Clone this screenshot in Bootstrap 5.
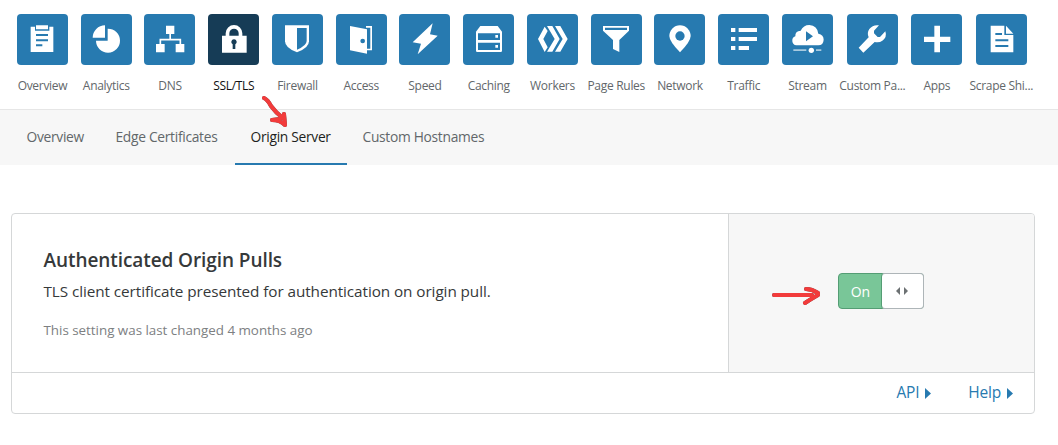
<!DOCTYPE html>
<html lang="en">
<head>
<meta charset="utf-8">
<meta name="viewport" content="width=device-width, initial-scale=1">
<title>SSL/TLS - Origin Server</title>
<link href="https://cdn.jsdelivr.net/npm/bootstrap@5.3.0/dist/css/bootstrap.min.css" rel="stylesheet">
<style>
:root{--blue:#277ab0;--navy:#163c56}
body{font-family:"Open Sans","Noto Sans",sans-serif;color:#36393a;height:445px;overflow:hidden}
.apps{height:109px;padding:14px 0 0 10.6px}
.app{width:63.75px;flex:none;color:#62676a;font-size:12px;letter-spacing:-.3px;line-height:18px;--tile:var(--blue)}
.app.wide{width:66px}.app.slim{width:63px}
.app.active{color:#111;--tile:var(--navy)}
.app svg{width:51px;height:51px;background:var(--tile);border-radius:4px;fill:#fff;margin-bottom:12px}
.app .cut{fill:var(--tile)}
.app .ln{fill:none;stroke:#fff}
.subnav{height:56px;background:#f7f7f7;border-top:1px solid #e6e6e6;padding-left:11px}
.subnav .nav-link{padding:16px 0 0 15.5px;height:55px;line-height:21px;font-size:13.8px;letter-spacing:-.3px;color:#62676a}
.subnav .nav-link.active{color:#1d1f20;border-bottom:2px solid var(--blue)}
.t1{width:89px}.t2{width:135px}.t3{width:112px}
.setting{width:1024px;height:201px;margin:48px 0 0 11px;border:1px solid #d5d7d8;border-radius:4px;overflow:hidden}
.setting .info{width:716px;padding:33px 0 0 31.5px}
.setting h1{font-size:19px;font-weight:600;letter-spacing:-.08px;line-height:26px;margin:0}
.setting .desc{font-size:15.3px;letter-spacing:-.08px;line-height:22px;margin:7px 0 0}
.setting .note{font-size:13.4px;letter-spacing:-.02px;line-height:20px;color:#7d8082;margin:18px 0 0}
.control{height:158px;background:#f7f7f7;border-left:1px solid #d5d7d8;padding:59px 0 0 109px}
.toggle{width:86px;height:36px;background:#79c698;border:1px solid #549d74;border-radius:4px;color:#fff;font-size:14px;line-height:36px;letter-spacing:-.2px}
.toggle .lbl{width:43px}
.toggle .knob{width:43px;height:36px;margin:-1px -1px 0 0;padding-right:2px;background:#fff;border:1px solid #aeb5b8;border-left-color:#549d74;border-radius:4px}
.setting .foot{height:41px;border-top:1px solid #d5d7d8;font-size:15.5px;letter-spacing:-.2px;padding-right:21px;gap:37px}
.foot a{color:var(--blue);text-decoration:none;gap:6px}
.mark-arrow{position:absolute;fill:none;stroke-linecap:round;stroke-linejoin:round;filter:drop-shadow(0 0 .5px #555)}
</style>
</head>
<body>
<nav class="apps d-flex text-center text-nowrap">
<div class="app"><svg viewBox="0 0 153 153"><path d="M41 38h68v76H41z"/><path class="cut" d="M54 35h43v15H54z"/><path d="M57 34h36v12H57z"/><path class="cut" d="M57 60h36v6H57zM57 76h36v6H57zM57 91h19v6H57z"/></svg><div>Overview</div></div>
<div class="app"><svg viewBox="0 0 153 153"><path d="M72 71V34A37 37 0 0 0 35 71zM80 44a36 36 0 1 1-35 36h35z"/></svg><div>Analytics</div></div>
<div class="app"><svg viewBox="0 0 153 153"><path d="M66 35h25v25H66zM36 90h26v25H36zM95 90h26v25H95z"/><path class="ln" stroke-width="5" d="M78.500 60v17M49 92V77h60v15"/></svg><div>DNS</div></div>
<div class="app active"><svg viewBox="0 0 153 153"><path d="M42 65h74v51H42z"/><path class="ln" stroke-width="11" d="M58.500 68V58a19.500 19.500 0 0 1 39 0v10"/><path class="cut" d="M78 76a8 8 0 0 1 4 15v14h-8V91a8 8 0 0 1 4-15z"/></svg><div>SSL/TLS</div></div>
<div class="app"><svg viewBox="0 0 153 153"><path d="M39 34h72v48q0 20-36 33Q39 102 39 82z"/><path class="cut" d="M75 42h29v39q0 14-29 26z"/></svg><div>Firewall</div></div>
<div class="app"><svg viewBox="0 0 153 153"><path d="M42 36h66v73H90V36"/><path class="cut" d="M67 41h36v63H90z"/><path d="M42 36l51 10v73l-51-10z"/><circle class="cut" cx="80" cy="81" r="7"/></svg><div>Access</div></div>
<div class="app"><svg viewBox="0 0 153 153"><path d="M101 28L41 85l25 4-10 32 60-56-23-4z"/></svg><div>Speed</div></div>
<div class="app"><svg viewBox="0 0 153 153"><path d="M52 36h52l13 17v57q0 4-4 4H43q-4 0-4-4V53z"/><path class="cut" d="M45 58h66v20H45zM45 86h66v22H45z"/><path d="M97 63h8v8h-8zM97 93h8v8h-8z"/></svg><div>Caching</div></div>
<div class="app"><svg viewBox="0 0 153 153"><path d="M53 38l9 13-13 24 13 25-9 14-20-39zM60 36h16l22 39-22 38H60l23-38zM84 36h16l22 39-22 38H84l23-38z"/></svg><div>Workers</div></div>
<div class="app"><svg viewBox="0 0 153 153"><path d="M36 36h78v14L85 78v36l-19-9V78L36 50z"/><path class="cut" d="M42 41h66v7H42z"/></svg><div>Page Rules</div></div>
<div class="app"><svg viewBox="0 0 153 153"><path d="M78 115Q46 82 46 66a32 32 0 0 1 64 0q0 16-32 49z"/><circle class="cut" cx="78" cy="66" r="14"/></svg><div>Network</div></div>
<div class="app"><svg viewBox="0 0 153 153"><path d="M39 42h13v12H39zM62 42h55v12H62zM39 69h13v12H39zM62 69h55v12H62zM39 96h13v12H39zM62 96h31v12H62z"/></svg><div>Traffic</div></div>
<div class="app"><svg viewBox="0 0 153 153"><path d="M43 94a14 14 0 0 1-3-27q-1-16 16-17 8-17 26-17 24 2 27 26 16 3 16 18-1 17-16 17z"/><path class="cut" d="M72 52l21 15-21 15z"/><path opacity=".6" d="M34 106h39v5H34zM102 106h16v5h-16z"/><circle cx="88" cy="109" r="8"/></svg><div>Stream</div></div>
<div class="app wide"><svg viewBox="0 0 153 153"><path d="M96 34L81 50v8l11 11h7l16-17q6 18-9 28-9 7-23 4l-34 32-14-15 30-31q-6-13 2-25 11-14 29-11z"/></svg><div>Custom Pa...</div></div>
<div class="app slim"><svg viewBox="0 0 153 153"><path d="M70 35h17v33h31v16H87v31H70V84H39V68h31z"/></svg><div>Apps</div></div>
<div class="app wide"><svg viewBox="0 0 153 153"><path d="M44 35h41v28h27v52H44zM90 35l22 24H90z"/><path class="cut" d="M58 57h20v6H58zM58 76h39v6H58zM58 93h39v6H58z"/></svg><div>Scrape Shi...</div></div>
</nav>
<ul class="nav subnav flex-nowrap text-nowrap">
<li class="t1"><a class="nav-link">Overview</a></li>
<li class="t2"><a class="nav-link">Edge Certificates</a></li>
<li class="t3"><a class="nav-link active">Origin Server</a></li>
<li><a class="nav-link">Custom Hostnames</a></li>
</ul>
<section class="setting">
<div class="d-flex">
<div class="info"><h1>Authenticated Origin Pulls</h1><p class="desc">TLS client certificate presented for authentication on origin pull.</p><p class="note">This setting was last changed 4 months ago</p></div>
<div class="control flex-grow-1"><div class="toggle d-flex text-center"><span class="lbl">On</span><span class="knob d-flex align-items-center justify-content-center"><svg width="12" height="8" viewBox="0 0 12 8" fill="#6c7173"><path d="M4 0v8L0 4zM8 0l4 4-4 4z"/></svg></span></div></div>
</div>
<div class="foot d-flex justify-content-end align-items-center">
<a class="d-flex align-items-center">API<svg width="6" height="11" viewBox="0 0 6 11" fill="currentColor"><path d="M0 0l6 5.500L0 11z"/></svg></a>
<a class="d-flex align-items-center">Help<svg width="6" height="11" viewBox="0 0 6 11" fill="currentColor"><path d="M0 0l6 5.500L0 11z"/></svg></a>
</div>
</section>
<!-- hand-drawn pointers over the tab and the toggle -->
<svg class="mark-arrow" style="left:250px;top:85px" width="60" height="50" stroke="#f23b3b" stroke-width="4"><path d="M14 13q4 2 7 8 5 7 13 13M34 29l1 11q-5-5-13-5l8-1"/></svg>
<svg class="mark-arrow" style="left:760px;top:280px" width="70" height="30" stroke="#f23b3b" stroke-width="4"><path d="M14 15h38M46 9q6 0 12 4v2q-7 4-13 8"/></svg>
<script src="https://cdn.jsdelivr.net/npm/bootstrap@5.3.0/dist/js/bootstrap.bundle.min.js"></script>
</body>
</html>
